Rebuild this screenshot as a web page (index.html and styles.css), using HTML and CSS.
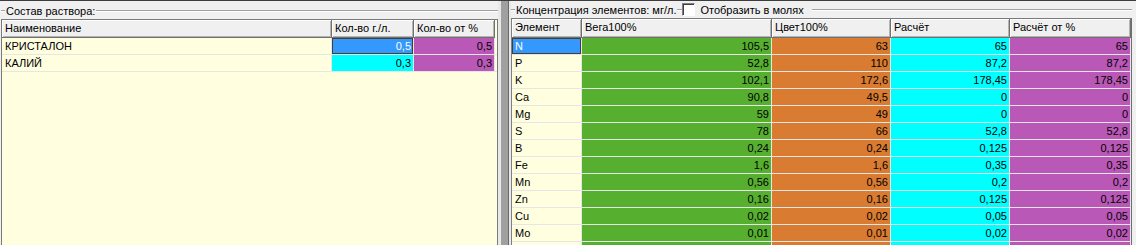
FILE: index.html
```html
<!DOCTYPE html>
<html lang="ru">
<head>
    <meta charset="UTF-8">
    <title>Состав раствора</title>
    <link rel="stylesheet" href="styles.css">
</head>
<body>
<div class="window">
    <section class="pane pane-left">
        <div class="group-title">
            <span class="etch etch-short"></span>
            <span class="caption">Состав раствора:</span>
            <span class="etch etch-fill"></span>
        </div>
        <div class="grid grid-mix">
            <div class="row head">
                <div class="cell">Наименование</div>
                <div class="cell">Кол-во г./л.</div>
                <div class="cell">Кол-во от %</div>
                <div class="cell filler"></div>
            </div>
            <div class="row">
                <div class="cell">КРИСТАЛОН</div>
                <div class="cell num blue focus">0,5</div>
                <div class="cell num purple">0,5</div>
                <div class="cell filler"></div>
            </div>
            <div class="row">
                <div class="cell">КАЛИЙ</div>
                <div class="cell num cyan">0,3</div>
                <div class="cell num purple">0,3</div>
                <div class="cell filler"></div>
            </div>
        </div>
    </section>

    <div class="splitter"><span class="bar"></span></div>

    <section class="pane pane-right">
        <div class="group-title">
            <span class="etch etch-short"></span>
            <span class="caption">Концентрация элементов: мг/л.</span>
            <span class="etch etch-gap"></span>
            <label class="check"><span class="box"></span>Отобразить в молях</label>
            <span class="etch etch-fill"></span>
        </div>
        <div class="grid grid-elements">
            <div class="row head">
                <div class="cell">Элемент</div>
                <div class="cell">Вега100%</div>
                <div class="cell">Цвет100%</div>
                <div class="cell">Расчёт</div>
                <div class="cell">Расчёт от %</div>
            </div>
            <div class="row">
                <div class="cell blue focus">N</div>
                <div class="cell num green">105,5</div>
                <div class="cell num orange">63</div>
                <div class="cell num cyan">65</div>
                <div class="cell num purple">65</div>
            </div>
            <div class="row">
                <div class="cell">P</div>
                <div class="cell num green">52,8</div>
                <div class="cell num orange">110</div>
                <div class="cell num cyan">87,2</div>
                <div class="cell num purple">87,2</div>
            </div>
            <div class="row">
                <div class="cell">K</div>
                <div class="cell num green">102,1</div>
                <div class="cell num orange">172,6</div>
                <div class="cell num cyan">178,45</div>
                <div class="cell num purple">178,45</div>
            </div>
            <div class="row">
                <div class="cell">Ca</div>
                <div class="cell num green">90,8</div>
                <div class="cell num orange">49,5</div>
                <div class="cell num cyan">0</div>
                <div class="cell num purple">0</div>
            </div>
            <div class="row">
                <div class="cell">Mg</div>
                <div class="cell num green">59</div>
                <div class="cell num orange">49</div>
                <div class="cell num cyan">0</div>
                <div class="cell num purple">0</div>
            </div>
            <div class="row">
                <div class="cell">S</div>
                <div class="cell num green">78</div>
                <div class="cell num orange">66</div>
                <div class="cell num cyan">52,8</div>
                <div class="cell num purple">52,8</div>
            </div>
            <div class="row">
                <div class="cell">B</div>
                <div class="cell num green">0,24</div>
                <div class="cell num orange">0,24</div>
                <div class="cell num cyan">0,125</div>
                <div class="cell num purple">0,125</div>
            </div>
            <div class="row">
                <div class="cell">Fe</div>
                <div class="cell num green">1,6</div>
                <div class="cell num orange">1,6</div>
                <div class="cell num cyan">0,35</div>
                <div class="cell num purple">0,35</div>
            </div>
            <div class="row">
                <div class="cell">Mn</div>
                <div class="cell num green">0,56</div>
                <div class="cell num orange">0,56</div>
                <div class="cell num cyan">0,2</div>
                <div class="cell num purple">0,2</div>
            </div>
            <div class="row">
                <div class="cell">Zn</div>
                <div class="cell num green">0,16</div>
                <div class="cell num orange">0,16</div>
                <div class="cell num cyan">0,125</div>
                <div class="cell num purple">0,125</div>
            </div>
            <div class="row">
                <div class="cell">Cu</div>
                <div class="cell num green">0,02</div>
                <div class="cell num orange">0,02</div>
                <div class="cell num cyan">0,05</div>
                <div class="cell num purple">0,05</div>
            </div>
            <div class="row">
                <div class="cell">Mo</div>
                <div class="cell num green">0,01</div>
                <div class="cell num orange">0,01</div>
                <div class="cell num cyan">0,02</div>
                <div class="cell num purple">0,02</div>
            </div>
            <div class="row">
                <div class="cell"></div>
                <div class="cell num green"></div>
                <div class="cell num orange"></div>
                <div class="cell num cyan"></div>
                <div class="cell num purple"></div>
            </div>
        </div>
    </section>
</div>
</body>
</html>
```

FILE: styles.css
```css
html, body {
    margin: 0;
    height: 100%;
    overflow: hidden;
}
body {
    font-family: "Liberation Sans", Arial, sans-serif;
    font-size: 11px;
    color: #000;
    background: #f0f0f0;
}
.window {
    display: flex;
    height: 245px;
    box-sizing: border-box;
    border-top: 1px solid #3c3c3c;
}
.pane {
    display: flex;
    flex-direction: column;
    overflow: hidden;
}
.pane-left {
    width: 498px;
    padding-left: 1px;
    box-sizing: border-box;
}
.pane-right {
    flex: 1;
    padding-right: 4px;
}

/* group box caption with etched line */
.group-title {
    display: flex;
    align-items: center;
    white-space: nowrap;
}
.pane-left .group-title {
    height: 18px;
    padding-top: 2px;
    box-sizing: border-box;
}
.pane-right .group-title {
    height: 17px;
}
.etch {
    height: 0;
    border-top: 1px solid #a0a0a0;
    border-bottom: 1px solid #fff;
}
.etch-short {
    width: 4px;
}
.etch-gap {
    width: 5px;
}
.etch-fill {
    flex: 1;
    margin-left: 8px;
}
.pane-left .etch-fill {
    margin-left: 0;
}
.caption {
    padding: 0 1px;
}
.check {
    display: flex;
    align-items: center;
}
.check .box {
    width: 11px;
    height: 11px;
    margin-right: 5px;
    background: #fff;
    border: 1px solid;
    border-color: #808080 #fff #fff #808080;
    box-shadow: inset 1px 1px 0 #404040;
}

/* splitter */
.splitter {
    width: 13px;
    display: flex;
    padding: 0 2px 0 3px;
    box-sizing: border-box;
    background: #e8e8e8;
}
.splitter .bar {
    flex: 1;
    background: #a0a0a0;
    border-right: 1px solid #6a6a6a;
}

/* grids */
.grid {
    flex: 1;
    background: #ffffe0;
    border: 1px solid #7a7a7a;
    border-bottom: none;
    overflow: hidden;
}
.grid-elements {
    border-left-color: #808080;
    border-right-color: #6e6e6e;
}
.row {
    display: grid;
    height: 17px;
}
.grid-mix .row {
    grid-template-columns: 330px 82px 81px 1fr;
}
.grid-elements .row {
    grid-template-columns: 70px 190px 119px 119px 1fr;
}
.cell {
    box-sizing: border-box;
    padding: 0 3px;
    line-height: 16px;
    border-right: 1px solid #e6e6e6;
    border-bottom: 1px solid #e6e6e6;
    overflow: hidden;
    white-space: nowrap;
}
.row.head {
    height: 19px;
}
.grid-mix .row.head {
    height: 18px;
}
.head .cell {
    background: #f0f0f0;
    line-height: 17px;
    border-right: 1px solid #707070;
    border-bottom: 1px solid #707070;
    box-shadow: inset 1px 1px 0 #fff, inset -1px -1px 0 #b4b4b4;
}
.grid-mix .head .cell {
    line-height: 16px;
}
.head .filler {
    background: #ffffe0;
    border: none;
    box-shadow: none;
}
.filler {
    border-right: none;
}
.num {
    text-align: right;
    padding-right: 2px;
}

.green { background: #57af30; }
.orange { background: #d97b31; }
.cyan { background: #00ffff; }
.purple { background: #b958b6; }
.blue {
    background: #3399ff;
    color: #fff;
}
.focus {
    box-shadow: inset 0 0 0 1px #4a3c30;
}
```
